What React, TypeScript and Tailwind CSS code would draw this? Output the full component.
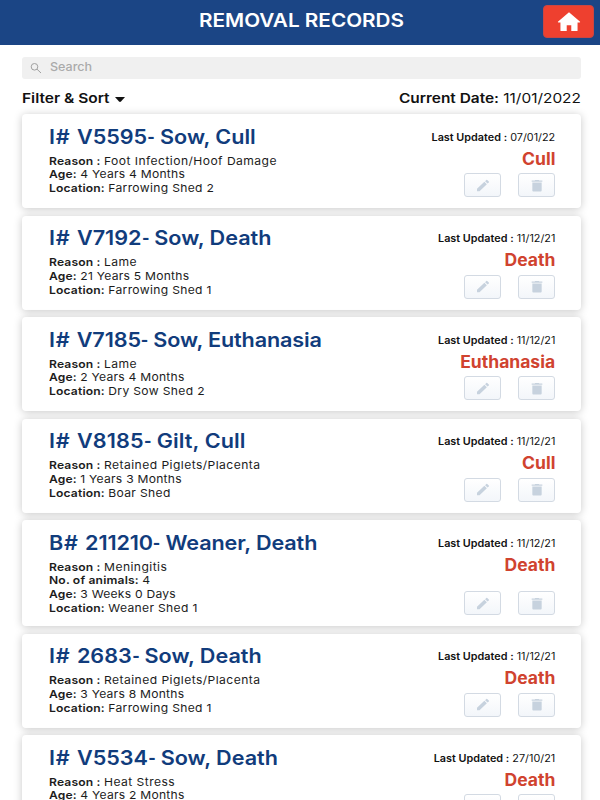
import React from "react";

type RecordItem = {
  prefix: string;
  code: string;
  title: string;
  titleTracking?: string;
  reason: string;
  animals?: string;
  age: string;
  location: string;
  updated: string;
  status: string;
};

const records: RecordItem[] = [
  { prefix: "I#", code: "V5595", title: "Sow, Cull", reason: "Foot Infection/Hoof Damage", age: "4 Years 4 Months", location: "Farrowing Shed 2", updated: "07/01/22", status: "Cull" },
  { prefix: "I#", code: "V7192", title: "Sow, Death", reason: "Lame", age: "21 Years 5 Months", location: "Farrowing Shed 1", updated: "11/12/21", status: "Death" },
  { prefix: "I#", code: "V7185", title: "Sow, Euthanasia", titleTracking: "tracking-[-0.12px]", reason: "Lame", age: "2 Years 4 Months", location: "Dry Sow Shed 2", updated: "11/12/21", status: "Euthanasia" },
  { prefix: "I#", code: "V8185", title: "Gilt, Cull", titleTracking: "tracking-[0.1px]", reason: "Retained Piglets/Placenta", age: "1 Years 3 Months", location: "Boar Shed", updated: "11/12/21", status: "Cull" },
  { prefix: "B#", code: "211210", title: "Weaner, Death", titleTracking: "tracking-[-0.11px]", reason: "Meningitis", animals: "4", age: "3 Weeks 0 Days", location: "Weaner Shed 1", updated: "11/12/21", status: "Death" },
  { prefix: "I#", code: "2683", title: "Sow, Death", reason: "Retained Piglets/Placenta", age: "3 Years 8 Months", location: "Farrowing Shed 1", updated: "11/12/21", status: "Death" },
  { prefix: "I#", code: "V5534", title: "Sow, Death", reason: "Heat Stress", age: "4 Years 2 Months", location: "Farrowing Shed 2", updated: "27/10/21", status: "Death" },
];

function Field({ label, value, tracking }: { label: string; value: string; tracking: string }) {
  return (
    <div>
      <span className="font-semibold tracking-[0.15px]">{label}</span> <span className={tracking}>{value}</span>
    </div>
  );
}

function IconButton({ label, path }: { label: string; path: string }) {
  return (
    <button
      aria-label={label}
      className="flex h-6 w-[37px] items-center justify-center rounded-[3px] border border-[#d3dae3] bg-linear-to-b from-white to-[#f3f6fa]"
    >
      <svg viewBox="0 0 24 24" preserveAspectRatio="none" className="h-[15px] w-4 fill-[#c7d2de]">
        <path d={path} />
      </svg>
    </button>
  );
}

function Card({ item }: { item: RecordItem }) {
  return (
    <article
      className={`flex shrink-0 justify-between rounded-[4px] bg-white pl-[27px] pr-[26px] shadow-[0_1px_8px_rgba(0,0,0,0.22)] ${
        item.animals ? "h-[106px]" : "h-[94px]"
      }`}
    >
      <div className="whitespace-nowrap pt-[8.6px]">
        <h2 className={`origin-left scale-x-[1.08] text-[20px] font-semibold leading-[28px] text-[#113c7c] ${item.titleTracking ?? "tracking-normal"}`}>
          <span className="mr-[1.2px] tracking-[0.6px]">{item.prefix}</span> {item.code}
          <span className="-mr-[2.5px] inline-block origin-left scale-x-75">-</span> {item.title}
        </h2>
        <div className="origin-left scale-x-[1.1] pt-[3.7px] text-[11px] leading-[13.7px] text-[#1c1c1c]">
          <Field label="Reason :" value={item.reason} tracking="tracking-[0.4px]" />
          {item.animals && <Field label="No. of animals:" value={item.animals} tracking="tracking-[0.2px]" />}
          <Field label="Age:" value={item.age} tracking="tracking-[0.22px]" />
          <Field label="Location:" value={item.location} tracking="tracking-[0.3px]" />
        </div>
      </div>
      <div className="flex flex-col items-end whitespace-nowrap pb-[11px] pt-[15.3px]">
        <div className="origin-right scale-x-[1.083] text-[10px] leading-[14px] text-[#111]">
          <span className="font-semibold">Last Updated :</span> {item.updated}
        </div>
        <div className="mt-[3px] origin-right scale-x-[1.03] text-[17px] font-bold leading-6 text-[#d0432f]">{item.status}</div>
        <div className="mt-auto flex gap-[17px]">
          <IconButton
            label="Edit"
            path="M3 17.25V21h3.75L17.81 9.94l-3.75-3.75L3 17.25zM20.71 7.04a1 1 0 0 0 0-1.41l-2.34-2.34a1 1 0 0 0-1.41 0l-1.83 1.83 3.75 3.75 1.83-1.83z"
          />
          <IconButton label="Delete" path="M5 7h14v13a1.5 1.5 0 0 1-1.5 1.5h-11A1.5 1.5 0 0 1 5 20V7zM20 4h-4.500l-1-1h-5l-1 1H4v2h16V4z" />
        </div>
      </div>
    </article>
  );
}

export default function App() {
  return (
    <div className="flex h-[800px] w-[600px] flex-col overflow-hidden bg-white font-['Inter',sans-serif]">
      <header className="grid h-[45px] shrink-0 grid-cols-[1fr_auto_1fr] items-center bg-[#1b4585] pr-[6px]">
        <h1 className="col-start-2 mb-[5px] ml-[10px] scale-x-[1.12] text-[18.500px] font-semibold leading-6 text-white">REMOVAL RECORDS</h1>
        <button aria-label="Home" className="mb-[2px] flex h-[33px] w-[51px] items-center justify-center justify-self-end rounded-[4px] border border-[#c94643] bg-[#ee402f]">
          <svg viewBox="0 0 24 20" className="h-[19px] w-6 fill-white">
            <path d="M12 0.300 0.300 10.200Q0 11 1 11h2v8.400q0 .6.600.6h6v-6h4.800v6h6q.6 0 .6-.6V11h2q1 0 .700-.8z" />
          </svg>
        </button>
      </header>
      <div className="flex shrink-0 flex-col pl-[22px] pr-[19px]">
        <div className="mt-[11.5px] flex h-[22px] shrink-0 items-center rounded-[3px] bg-[#f0f0f0] pl-2 text-[#aaa]">
          <svg viewBox="0 0 12 12" className="h-3 w-3 fill-none stroke-[#a0a0a0] stroke-1">
            <circle cx="4.500" cy="4.800" r="3.300" />
            <path d="M7 7.200 11 11" />
          </svg>
          <span className="ml-[8px] origin-left scale-x-[1.09] text-[11.500px] font-medium">Search</span>
        </div>
        <div className="mt-[9px] flex h-[20px] shrink-0 items-center justify-between text-[13.300px] leading-5 text-[#111]">
          <div className="flex items-center gap-[18px] font-semibold">
            <span className="origin-left scale-x-[1.165]">Filter &amp; Sort</span>
            <svg viewBox="0 0 10 5" className="mt-[3px] h-[5px] w-[10px] fill-[#111]">
              <path d="M0 0h10L6 4.500Q5 5.300 4 4.500z" />
            </svg>
          </div>
          <div className="origin-right scale-x-[1.16]">
            <span className="font-semibold">Current Date:</span> 11/01/2022
          </div>
        </div>
        <main className="mt-[6.900px] flex flex-col gap-[7.500px]">
          {records.map((item) => (
            <Card key={item.code} item={item} />
          ))}
        </main>
      </div>
    </div>
  );
}
